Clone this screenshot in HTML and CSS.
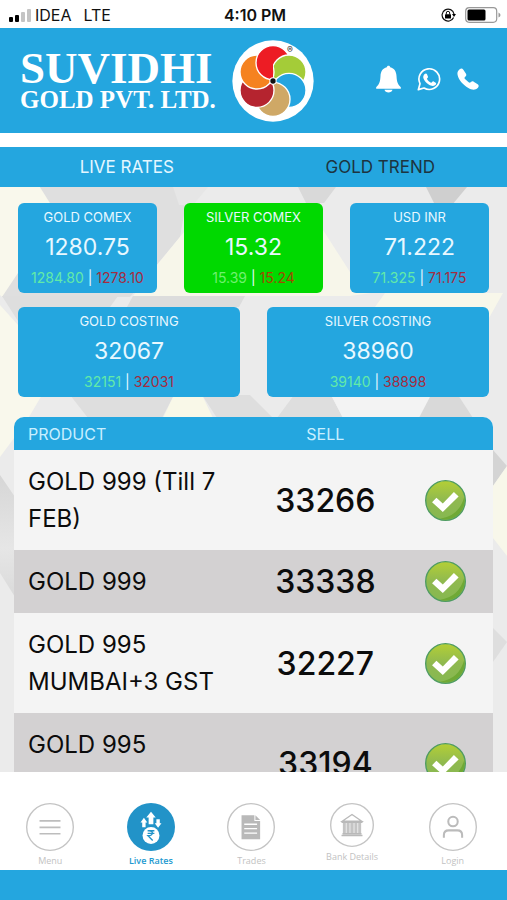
FILE: index.html
```html
<!DOCTYPE html>
<html lang="en">
<head>
<meta charset="utf-8">
<meta name="viewport" content="width=device-width, initial-scale=1">
<title>Suvidhi Gold Pvt. Ltd.</title>
<link rel="stylesheet" href="styles.css">
</head>
<body>
<div class="status">
  <div class="status-left">
    <svg class="signal" viewBox="0 0 22 13" aria-hidden="true"><rect x="0" y="8" width="4" height="5" rx="1"/><rect x="6" y="6" width="4" height="7" rx="1"/><g fill="#c4c4c4"><rect x="12" y="3" width="4" height="10" rx="1"/><rect x="18" y="0" width="4" height="13" rx="1"/></g></svg>
    <span>IDEA</span><span class="network">LTE</span>
  </div>
  <div class="clock">4:10 PM</div>
  <div class="status-right">
    <svg class="lock" viewBox="0 0 15 14" aria-hidden="true"><path d="M12.6 9.5A6 6 0 1 1 13 6" fill="none" stroke="#111" stroke-width="1.2"/><path d="M11 6h4l-2 3z"/><rect x="4" y="6.300" width="6" height="4.200" rx=".5"/><path d="M5.300 6.500V5a1.700 1.700 0 0 1 3.400 0v1.500" fill="none" stroke="#111" stroke-width="1"/></svg>
    <svg class="battery" viewBox="0 0 36 16" aria-hidden="true"><rect x=".7" y=".7" width="31" height="14.600" rx="3.500" fill="#fff" stroke="#999" stroke-width="1.200"/><rect x="2.500" y="2.500" width="18" height="11" rx="1.500"/><path d="M33.500 5.500v5q2-1 2-2.500t-2-2.500z" fill="#999"/></svg>
  </div>
</div>

<header class="header">
  <div class="brand">
    <div class="brand-text"><h1>SUVIDHI</h1><p>GOLD PVT. LTD.</p></div>
    <svg class="logo" viewBox="-123 -123 246 246" role="img" aria-label="Suvidhi logo">
      <defs><clipPath id="left"><rect x="-60" y="-120" width="60" height="120"/></clipPath></defs>
      <circle r="122" fill="#fff"/>
      <g stroke="#fff" stroke-width="4">
        <circle cx="0" cy="-55" r="51" fill="#ed1c24"/>
        <circle cx="48" cy="-27" r="51" fill="#a4cc38"/>
        <circle cx="48" cy="28" r="51" fill="#24a5e0"/>
        <circle cx="0" cy="55" r="51" fill="#cfa866"/>
        <circle cx="-48" cy="28" r="51" fill="#b5242f"/>
        <circle cx="-48" cy="-27" r="51" fill="#f58220"/>
        <circle cx="0" cy="-55" r="51" fill="#ed1c24" clip-path="url(#left)"/>
      </g>
      <circle r="11" fill="#fff"/><circle r="8" fill="#111"/>
      <text class="registered" x="51" y="-83" text-anchor="middle">®</text>
    </svg>
  </div>
  <div class="actions">
    <button type="button" aria-label="Notifications"><svg class="bell" viewBox="0 0 74 84"><path d="M37 2c3 0 5 2 5 5 13 3 18 13 19 26 1 17 3 24 13 34v4H0v-4c10-10 12-17 13-34C14 20 19 10 32 7c0-3 2-5 5-5zM25 74h24c-2 11-22 11-24 0z"/></svg></button>
    <button type="button" aria-label="WhatsApp"><svg class="whatsapp" viewBox="0 0 72 72"><path d="M4 68l5-18a31 31 0 1 1 12 13z" fill="none" stroke="#fff" stroke-width="5" stroke-linejoin="round"/><path d="M23 21c3-3 6-2 7 1l3 7c1 3-4 5-3 7 3 6 7 9 12 11 3 1 4-5 7-4l7 4c3 2 1 6-2 8-5 4-13 2-20-3-7-5-13-12-15-19-1-5 1-9 4-12z"/></svg></button>
    <button type="button" aria-label="Call"><svg class="phone" viewBox="0 0 66 66"><path d="M8 4C12 0 16 1 19 5l8 12c2 4 1 7-3 10-2 2-2 4 0 6l11 10c2 2 4 2 6 0 3-3 6-4 9-2l12 8c4 3 4 7 0 11-7 7-18 6-28 0C18 51 5 36 2 22 0 14 2 9 8 4z"/></svg></button>
  </div>
</header>

<nav class="tabs"><a class="active" href="#rates">LIVE RATES</a><a href="#trend">GOLD TREND</a></nav>

<main class="content" id="rates">
  <svg class="backdrop" viewBox="0 0 507 585" preserveAspectRatio="none" aria-hidden="true">
    <defs>
      <linearGradient id="shade" x1="0" y1="0" x2="0" y2="1"><stop offset="0" stop-color="#d6d6d6"/><stop offset=".6" stop-color="#e6e6e6"/><stop offset="1" stop-color="#dadada"/></linearGradient>
    </defs>
    <path fill="#ebebeb" d="M0 0h507v585H0z"/>
    <path fill="#f9f8ec" d="M0 0h40l10 16v70L2 110 0 108z"/>
    <path fill="#f9f8ec" d="M0 118l18 20v70h24l-16 27L0 270z"/>
    <path fill="#dfdfdf" d="M40 0h133l13 16-6 34-50 60H2l16-24 32-70z"/>
    <path fill="#e6e6e6" d="M173 0h35l-15 18h-14z"/>
    <path fill="#f7f6ea" d="M184 45l-27 33-24 31h217l28-4-28-20-27-42z"/>
    <path fill="#d9d9d9" d="M298 0h38l-12 16h-18z"/>
    <path fill="#cfcfcf" d="M426 0h41l-15 18h-17z"/>
    <path fill="#dedede" d="M2 109h116l-8 11H40l-22 14z"/>
    <path fill="#dcdcdc" d="M133 109h112l-6 11H127z"/>
    <path fill="#f8f7ea" d="M385 106h118l-14 25-20-11h-94z"/>
    <path fill="#dedede" d="M70 208h104l-12 23H88zM202 208h48l23 23h-56zM294 208h37l12 23h-66z"/>
    <path fill="#f9f8e8" d="M174 208h28l11 23h-50z"/>
    <path fill="#f3f3f3" d="M331 208h100l-12 23h-76z"/>
    <path fill="#d9d9d9" d="M431 208h27l15 23h-54z"/>
    <path fill="url(#shade)" d="M0 288l15 22v100L0 386z"/>
    <path fill="#d4d4d4" d="M493 263l14 16-14 20z"/>
    <path fill="#f8f7ea" d="M507 279v90l-14-18v-52z"/>
    <path fill="#dedede" d="M493 441l14 14-14 20z"/>
  </svg>
  <section class="cards three">
    <article class="card"><h2>GOLD COMEX</h2><strong>1280.75</strong><p><span class="high">1284.80</span> | <span class="low">1278.10</span></p></article>
    <article class="card up"><h2>SILVER COMEX</h2><strong>15.32</strong><p><span class="high">15.39</span> | <span class="low">15.24</span></p></article>
    <article class="card"><h2>USD INR</h2><strong>71.222</strong><p><span class="high">71.325</span> | <span class="low">71.175</span></p></article>
  </section>
  <section class="cards two">
    <article class="card"><h2>GOLD COSTING</h2><strong>32067</strong><p><span class="high">32151</span> | <span class="low">32031</span></p></article>
    <article class="card"><h2>SILVER COSTING</h2><strong>38960</strong><p><span class="high">39140</span> | <span class="low">38898</span></p></article>
  </section>
  <svg class="symbols" aria-hidden="true"><defs>
    <linearGradient id="green" x1="0" y1="0" x2="0" y2="1"><stop offset="0" stop-color="#b4cf35"/><stop offset=".5" stop-color="#8fb950"/><stop offset="1" stop-color="#86b850"/></linearGradient>
    <symbol id="tick" viewBox="0 0 122 122"><circle cx="61" cy="61" r="59" fill="url(#green)" stroke="#4f9c62" stroke-width="4"/><path d="M117 50A57 57 0 0 1 45 115Q101 108 117 50z" fill="#6fa935"/><path d="M21 66l13-13 19 17 33-34 14 13-47 46z" fill="#fff"/></symbol>
  </defs></svg>
  <table class="products">
    <thead><tr><th class="name">PRODUCT</th><th class="sell">SELL</th><th class="state"></th></tr></thead>
    <tbody>
      <tr><td class="name">GOLD 999 (Till 7 FEB)</td><td class="sell">33266</td><td class="state"><svg class="tick"><use href="#tick"/></svg></td></tr>
      <tr><td class="name">GOLD 999</td><td class="sell">33338</td><td class="state"><svg class="tick"><use href="#tick"/></svg></td></tr>
      <tr><td class="name">GOLD 995 MUMBAI+3 GST</td><td class="sell">32227</td><td class="state"><svg class="tick"><use href="#tick"/></svg></td></tr>
      <tr class="tall"><td class="name">GOLD 995</td><td class="sell">33194</td><td class="state"><svg class="tick"><use href="#tick"/></svg></td></tr>
    </tbody>
  </table>
</main>

<nav class="bottom">
  <a href="#menu"><svg viewBox="0 0 142 142"><circle class="ring" cx="71" cy="71" r="69"/><path class="line" d="M40 53h62M40 72h62M40 91h62"/></svg><span>Menu</span></a>
  <a class="active" href="#rates"><svg viewBox="0 0 142 142"><circle cx="71" cy="71" r="71" fill="#2293c8"/><path fill="#fff" d="M71 26l14 17h-7v20H64V43h-7zM50 44l10 14h-5v14H45V58h-5zM87 48h10v12h5L92 73 82 60h5z"/><circle cx="71" cy="96" r="25" fill="#fff"/><path d="M61 82h20M61 90h20M65 82c14 0 14 15-3 15l14 14" fill="none" stroke="#2293c8" stroke-width="4"/></svg><span>Live Rates</span></a>
  <a href="#trades"><svg viewBox="0 0 142 142"><circle class="ring" cx="71" cy="71" r="69"/><path fill="#b9b9b9" d="M43 36h38v17h17v54H43zM84 36l14 14H84z"/><path d="M51 63h38M51 76h38M51 89h38" fill="none" stroke="#fff" stroke-width="4"/></svg><span>Trades</span></a>
  <a class="small" href="#bank"><svg viewBox="0 0 130 130"><circle class="ring" cx="65" cy="65" r="63"/><path d="M36 54l29-20 29 20z" fill="#fff" stroke="#b9b9b9" stroke-width="4"/><path fill="#c4c4c4" d="M38 58h54v34H38z"/><path d="M48 59v32M59 59v32M71 59v32M82 59v32" fill="none" stroke="#fff" stroke-width="2"/><path d="M34 57h62M34 96h62M37 91h56" fill="none" stroke="#b9b9b9" stroke-width="4"/></svg><span>Bank Details</span></a>
  <a href="#login"><svg viewBox="0 0 142 142"><circle class="ring" cx="71" cy="71" r="69"/><circle cx="71" cy="55" r="14" fill="none" stroke="#bbb" stroke-width="6"/><path d="M44 103V95q0-14 14-14h26q14 0 14 14v8" fill="none" stroke="#bbb" stroke-width="6"/></svg><span>Login</span></a>
</nav>
<footer class="base"></footer>
</body>
</html>
```
FILE: styles.css
```css
:root { --blue: #24a6df; }
* { box-sizing: border-box; }
body {
  margin: 0;
  height: 100vh;
  display: flex;
  flex-direction: column;
  background: #fff;
  color: #111;
  font-family: Inter, "Liberation Sans", sans-serif;
}
h1, h2, p { margin: 0; font-weight: 400; }
a { text-decoration: none; color: inherit; }
svg { display: block; }

.status {
  flex: none;
  display: grid;
  grid-template-columns: 1fr auto 1fr;
  align-items: center;
  height: 28px;
  padding: 2px 6px 0 9px;
  font-size: 16px;
}
.status-left, .status-right { display: flex; align-items: center; }
.status-left { gap: 4px; }
.status-right { justify-content: flex-end; gap: 9px; }
.network { margin-left: 8px; }
.signal { width: 22px; height: 13px; }
.clock { font-weight: 600; }
.lock { width: 15px; height: 14px; }
.battery { width: 36px; height: 16px; }

.header {
  flex: none;
  display: flex;
  justify-content: space-between;
  align-items: center;
  height: 105px;
  padding: 0 28px 0 20px;
  background: var(--blue);
  color: #fff;
}
.brand { display: flex; align-items: center; gap: 16px; }
.brand-text { font-family: "Liberation Serif", serif; padding-bottom: 2px; }
.brand h1 { font-size: 45px; line-height: 40px; font-weight: 700; }
.brand p { font-size: 25px; line-height: 24px; font-weight: 700; }
.logo { width: 82px; height: 82px; }
.registered { font: 26px Inter, sans-serif; fill: #222; }
.actions { display: flex; align-items: center; gap: 16px; padding-bottom: 4px; }
.actions button { padding: 0; border: 0; background: none; }
.actions svg { fill: #fff; }
.bell { width: 25px; height: 28px; }
.whatsapp { width: 24px; height: 24px; }
.phone { width: 22px; height: 22px; }

.tabs {
  flex: none;
  display: grid;
  grid-template-columns: 1fr 1fr;
  height: 40px;
  margin-top: 14px;
  background: var(--blue);
  color: #1d3440;
  font-size: 17px;
  line-height: 40px;
  text-align: center;
}
.tabs .active { color: #e4f7ff; }

.content {
  flex: 1;
  min-height: 0;
  position: relative;
  overflow: hidden;
  padding-top: 16px;
}
.backdrop { position: absolute; inset: 0; width: 100%; height: 100%; z-index: -1; }
.symbols { position: absolute; width: 0; height: 0; }

.cards { display: grid; gap: 27px; padding: 0 18px; margin-bottom: 14px; }
.three { grid-template-columns: repeat(3, 1fr); }
.two { grid-template-columns: repeat(2, 1fr); margin-bottom: 20px; }
.card {
  height: 90px;
  padding-top: 4px;
  border-radius: 6px;
  background: var(--blue);
  color: #e8f8ff;
  text-align: center;
}
.card.up { background: #00d900; }
.card h2 { font-size: 13px; line-height: 20px; }
.card strong { display: block; font-size: 23px; line-height: 40px; font-weight: 400; }
.card p { font-size: 14px; line-height: 22px; }
.high { color: #62eaa8; }
.up .high { color: #70f070; }
.low { color: #a52c3f; }
.up .low { color: #a04a00; }

.products {
  width: calc(100% - 28px);
  margin: 0 14px;
  table-layout: fixed;
  border-collapse: collapse;
  background: #f4f4f4;
  border-radius: 10px 10px 0 0;
  overflow: hidden;
}
.products th {
  height: 33px;
  padding: 0;
  background: var(--blue);
  color: #c9efff;
  font-size: 16px;
  font-weight: 400;
}
.products td { padding: 13px 0; line-height: 37px; color: #0c0c0c; }
.products .name { width: 50%; padding-left: 14px; text-align: left; }
.products .sell { width: 30%; text-align: center; }
.products .state { width: 20%; }
.products td.name { font-size: 24px; vertical-align: top; }
.products td.sell { font-size: 32px; font-weight: 500; }
.products td.sell, .products td.state { padding: 0; }
.products tbody tr:nth-child(even) { background: #d3d1d2; }
.tall { height: 100px; }
.tick { width: 41px; height: 41px; margin: 0 auto; }

.bottom {
  flex: none;
  display: grid;
  grid-template-columns: repeat(5, 1fr);
  height: 98px;
  padding: 31px 4px 0 0;
  color: #c2c2c2;
  font: 9px/12px "Open Sans", sans-serif;
}
.bottom a { display: flex; flex-direction: column; align-items: center; gap: 4px; }
.bottom svg { width: 48px; height: 48px; }
.bottom .small svg { width: 44px; height: 44px; }
.bottom .active { color: #2299d0; font-weight: 600; }
.ring { fill: #fff; stroke: #c4c4c4; stroke-width: 4; }
.line { fill: none; stroke: #bdbdbd; stroke-width: 5; }
.base { flex: none; height: 30px; background: var(--blue); }
```
